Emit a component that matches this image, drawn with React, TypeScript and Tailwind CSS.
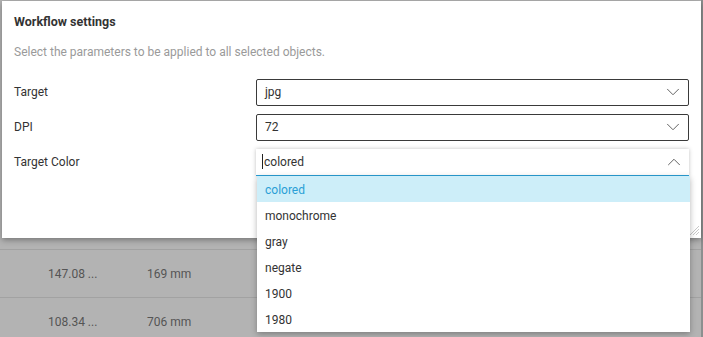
import { ChevronDown, ChevronUp } from "lucide-react";

const options = ["colored", "monochrome", "gray", "negate", "1900", "1980"];

function SelectBox({ value }: { value: string }) {
  return (
    <div className="flex h-[27px] w-[433px] items-center justify-between rounded-[2px] border border-[#3a3a3a] bg-white pl-[8px] pr-[4px] text-[12px] text-[#333]">
      <span>{value}</span>
      <ChevronDown size={22} strokeWidth={1} className="text-[#555]" />
    </div>
  );
}

export default function App() {
  return (
    <div className="relative h-[337px] w-[703px] overflow-hidden bg-[#b3b3b3] font-['Roboto',sans-serif]">
      {/* table behind the modal */}
      <div className="flex flex-col pt-[249px] text-[12px] text-[#555]">
        {[
          ["147.08 ...", "169 mm"],
          ["108.34 ...", "706 mm"],
        ].map(([a, b]) => (
          <div
            key={a}
            className="flex h-[48px] items-center border-t border-[#a2a2a2]"
          >
            <span className="w-[147px] pl-[48px]">{a}</span>
            <span>{b}</span>
          </div>
        ))}
      </div>
      <div className="absolute right-0 top-0 h-full w-[2px] bg-[#8c8f8f]" />

      {/* dialog */}
      <div className="absolute left-[2px] top-[1px] flex h-[237px] w-[699px] flex-col bg-white px-[12px] shadow-[0_2px_6px_rgba(0,0,0,0.35)]">
        <div className="pt-[12px] text-[12.5px] font-bold text-[#333]">
          Workflow settings
        </div>
        <div className="pt-[11px] text-[12px] text-[#9a9a9a]">
          Select the parameters to be applied to all selected objects.
        </div>
        <div className="mt-[18px] flex flex-col gap-[8px]">
          <div className="flex items-center justify-between text-[12px] text-[#333]">
            <span>Target</span>
            <SelectBox value="jpg" />
          </div>
          <div className="flex items-center justify-between text-[12px] text-[#333]">
            <span>DPI</span>
            <SelectBox value="72" />
          </div>
          <div className="flex items-center justify-between text-[12px] text-[#333]">
            <span>Target Color</span>
            <div className="flex h-[27px] w-[433px] items-center justify-between border-b border-[#2a9fd6] bg-white pl-[6px] pr-[4px] shadow-[0_0_4px_rgba(0,0,0,0.25)]">
              <span className="flex items-center">
                <span className="mr-[1px] h-[15px] w-px bg-[#222]" />
                colored
              </span>
              <ChevronUp size={22} strokeWidth={1} className="text-[#555]" />
            </div>
          </div>
        </div>
        <svg
          className="absolute bottom-[2px] right-[1px]"
          width="12"
          height="12"
          viewBox="0 0 12 12"
        >
          <path
            d="M11 2 L2 11 M11 5 L5 11 M11 8 L8 11"
            stroke="#c8c8c8"
            strokeWidth="1"
          />
        </svg>
      </div>

      {/* open dropdown list */}
      <ul className="absolute left-[257px] top-[176px] w-[433px] bg-white text-[12px] text-[#333] shadow-[0_2px_6px_rgba(0,0,0,0.3)]">
        {options.map((o, i) => (
          <li
            key={o}
            className={
              i === 0
                ? "flex h-[26px] items-center bg-[#cdeef9] px-[8px] pt-px text-[#2a9fd6]"
                : "flex h-[26px] items-center px-[8px] pt-px"
            }
          >
            {o}
          </li>
        ))}
      </ul>
    </div>
  );
}
